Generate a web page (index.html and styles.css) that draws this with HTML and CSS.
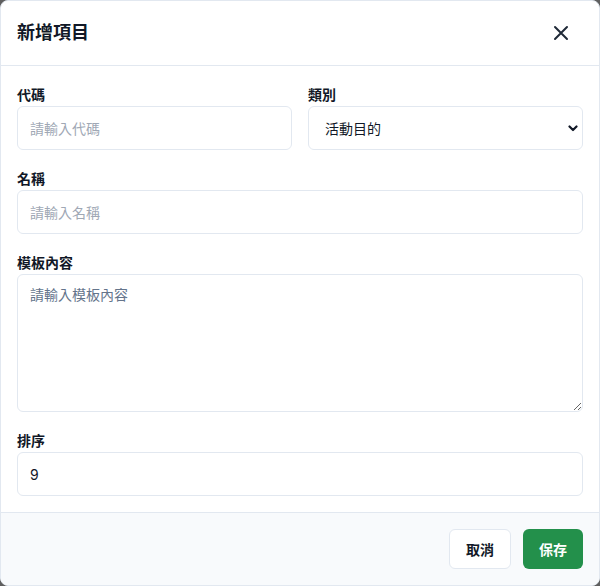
FILE: index.html
```html
<!DOCTYPE html>
<html lang="zh-Hant">
<head>
<meta charset="utf-8">
<title>新增項目</title>
<link rel="stylesheet" href="styles.css">
</head>
<body>
<div class="modal">
  <header class="modal-header">
    <h2 class="modal-title">新增項目</h2>
    <button class="close-btn" type="button" aria-label="關閉">
      <svg width="24" height="24" viewBox="0 0 24 24" fill="none" stroke="#1f2937" stroke-width="2" stroke-linecap="round"><path d="M6 6L18 18M18 6L6 18"/></svg>
    </button>
  </header>
  <div class="modal-body">
    <div class="row">
      <div class="field">
        <label class="label">代碼</label>
        <input class="control" type="text" placeholder="請輸入代碼">
      </div>
      <div class="field">
        <label class="label">類別</label>
        <div class="select-wrap">
          <select class="control select">
            <option>活動目的</option>
          </select>
          <svg class="chevron" width="10" height="7" viewBox="0 0 10 7" fill="none" stroke="#111827" stroke-width="2.2" stroke-linecap="round" stroke-linejoin="round"><path d="M1.5 1.5L5 5L8.5 1.5"/></svg>
        </div>
      </div>
    </div>
    <div class="field">
      <label class="label">名稱</label>
      <input class="control" type="text" placeholder="請輸入名稱">
    </div>
    <div class="field">
      <label class="label">模板內容</label>
      <textarea class="control textarea" placeholder="請輸入模板內容"></textarea>
    </div>
    <div class="field">
      <label class="label">排序</label>
      <input class="control" type="text" value="9">
    </div>
  </div>
  <footer class="modal-footer">
    <button class="btn btn-cancel" type="button">取消</button>
    <button class="btn btn-save" type="button">保存</button>
  </footer>
</div>
</body>
</html>
```
FILE: styles.css
```css
* { box-sizing: border-box; }
html, body { margin: 0; padding: 0; }
body {
  background: #5f5f5f;
  font-family: Inter, "Noto Sans CJK TC", "Noto Sans", sans-serif;
  color: #111827;
}
.modal {
  width: 600px;
  height: 586px;
  background: #ffffff;
  border: 1px solid #e2e8f0;
  border-radius: 8px;
  overflow: hidden;
  display: flex;
  flex-direction: column;
}
.modal-header {
  height: 65px;
  flex: none;
  display: flex;
  align-items: center;
  justify-content: space-between;
  padding: 0 20px 0 16px;
  border-bottom: 1px solid #e2e8f0;
}
.modal-title {
  margin: 0;
  font-size: 18px;
  font-weight: 700;
  line-height: 24px;
  color: #111827;
}
.close-btn {
  border: 0;
  background: transparent;
  padding: 6px;
  display: flex;
  cursor: pointer;
}
.modal-body {
  flex: 1;
  padding: 19px 16px 16px;
  display: flex;
  flex-direction: column;
  gap: 19px;
}
.row {
  display: grid;
  grid-template-columns: 1fr 1fr;
  gap: 16px;
}
.field {
  display: flex;
  flex-direction: column;
}
.label {
  font-size: 14px;
  font-weight: 700;
  line-height: 20px;
  margin-bottom: 1px;
  color: #111827;
}
.control {
  width: 100%;
  height: 44px;
  border: 1px solid #e2e8f0;
  border-radius: 6px;
  background: #ffffff;
  padding: 0 12px;
  font-family: Inter, "Noto Sans CJK TC", sans-serif;
  font-size: 14px;
  color: #111827;
  outline: none;
}
.control::placeholder { color: #a0a8b5; }
.select-wrap { position: relative; }
.select {
  appearance: none;
  -webkit-appearance: none;
  padding-left: 16px;
}
.chevron {
  position: absolute;
  right: 5px;
  top: 19px;
  pointer-events: none;
}
.textarea {
  height: 138px;
  padding: 10px 12px;
  line-height: 20px;
  resize: vertical;
}
.textarea::placeholder { color: #64748b; }
.modal-footer {
  flex: none;
  height: 73px;
  background: #f8fafc;
  border-top: 1px solid #e2e8f0;
  padding: 16px;
  display: flex;
  justify-content: flex-end;
  gap: 12px;
}
.btn {
  height: 40px;
  padding: 0 16px;
  border-radius: 6px;
  font-family: Inter, "Noto Sans CJK TC", sans-serif;
  font-size: 14px;
  font-weight: 700;
  cursor: pointer;
}
.btn-cancel {
  background: #ffffff;
  border: 1px solid #e2e8f0;
  color: #111827;
}
.btn-save {
  background: #23904b;
  border: 0;
  color: #ffffff;
}
```
